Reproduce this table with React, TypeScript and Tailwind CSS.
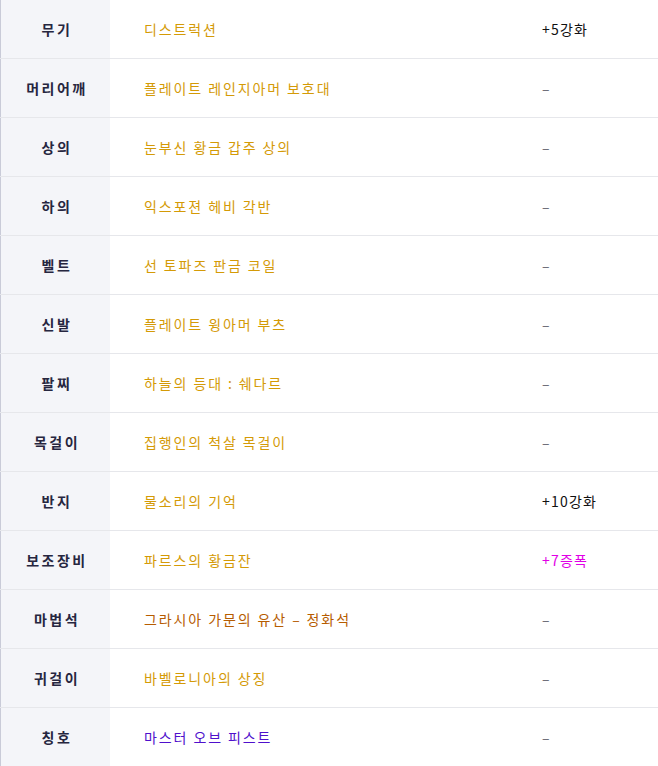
const rows: { slot: string; name: string; nameColor: string; value: string; valueColor: string }[] = [
  { slot: "무기", name: "디스트럭션", nameColor: "text-[#d49a06]", value: "+5강화", valueColor: "text-[#111111]" },
  { slot: "머리어깨", name: "플레이트 레인지아머 보호대", nameColor: "text-[#d49a06]", value: "–", valueColor: "text-[#666672]" },
  { slot: "상의", name: "눈부신 황금 갑주 상의", nameColor: "text-[#d49a06]", value: "–", valueColor: "text-[#666672]" },
  { slot: "하의", name: "익스포젼 헤비 각반", nameColor: "text-[#d49a06]", value: "–", valueColor: "text-[#666672]" },
  { slot: "벨트", name: "선 토파즈 판금 코일", nameColor: "text-[#d49a06]", value: "–", valueColor: "text-[#666672]" },
  { slot: "신발", name: "플레이트 윙아머 부츠", nameColor: "text-[#d49a06]", value: "–", valueColor: "text-[#666672]" },
  { slot: "팔찌", name: "하늘의 등대 : 쉐다르", nameColor: "text-[#d49a06]", value: "–", valueColor: "text-[#666672]" },
  { slot: "목걸이", name: "집행인의 척살 목걸이", nameColor: "text-[#d49a06]", value: "–", valueColor: "text-[#666672]" },
  { slot: "반지", name: "물소리의 기억", nameColor: "text-[#d49a06]", value: "+10강화", valueColor: "text-[#111111]" },
  { slot: "보조장비", name: "파르스의 황금잔", nameColor: "text-[#d49a06]", value: "+7증폭", valueColor: "text-[#e100e6]" },
  { slot: "마법석", name: "그라시아 가문의 유산 – 정화석", nameColor: "text-[#b65c00]", value: "–", valueColor: "text-[#666672]" },
  { slot: "귀걸이", name: "바벨로니아의 상징", nameColor: "text-[#d49a06]", value: "–", valueColor: "text-[#666672]" },
  { slot: "칭호", name: "마스터 오브 피스트", nameColor: "text-[#4f10cc]", value: "–", valueColor: "text-[#666672]" },
];

export default function App() {
  return (
    <div className="w-[658px] h-[766px] overflow-hidden bg-white font-['Noto_Sans_CJK_KR','Noto_Sans',sans-serif] text-[14px]">
      <div className="flex flex-col">
        {rows.map((row, i) => (
          <div
            key={row.slot}
            className={`grid grid-cols-[110px_432px_1fr] h-[59px] ${i < rows.length - 1 ? "border-b border-[#e6e7eb]" : ""}`}
          >
            <div className="flex items-center justify-center pl-[3px] bg-[#f4f5f9] border-l border-[#c9cbd8] font-bold text-[#262640] tracking-[2.5px]">
              {row.slot}
            </div>
            <div className={`flex items-center pl-[34px] tracking-[1.9px] ${row.nameColor}`}>{row.name}</div>
            <div className={`flex items-center tracking-[1.2px] ${row.valueColor}`}>{row.value}</div>
          </div>
        ))}
      </div>
    </div>
  );
}
